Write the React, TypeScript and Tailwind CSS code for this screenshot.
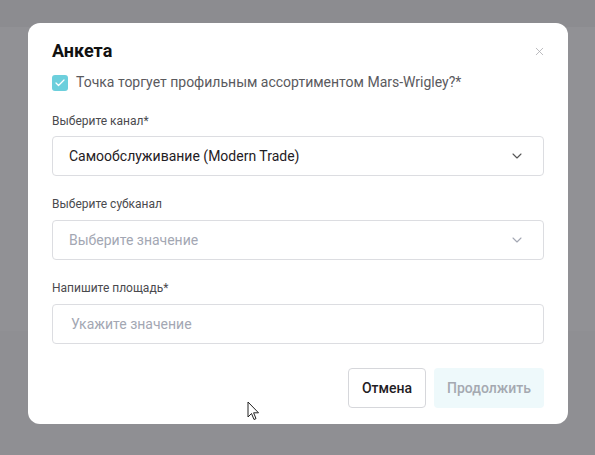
import { ChevronDown, X, Check } from 'lucide-react'

function Select({ value, placeholder }: { value?: string; placeholder: string }) {
  return (
    <div className="flex h-10 items-center justify-between rounded border border-[#dcdde1] bg-white pl-4 pr-[18px]">
      <span className={value ? 'text-[14px] text-[#1f2024]' : 'text-[14px] text-[#a3a7b3]'}>{value || placeholder}</span>
      <ChevronDown className={value ? 'h-4 w-4 text-[#555]' : 'h-4 w-4 text-[#a3a7b3]'} strokeWidth={1.6} />
    </div>
  )
}

export default function App() {
  return (
    <div className="relative h-[455px] w-full overflow-hidden bg-[#8e8e92]" style={{ fontFamily: 'Roboto, "Noto Sans", sans-serif' }}>
      <div className="flex h-full flex-col">
        <div className="h-[27px] bg-[#8c8c90]" />
        <div className="h-[304px] bg-[#919195]" />
        <div className="flex-1 bg-[#8f8f93]" />
      </div>

      <div className="absolute left-[28px] top-[23px] flex h-[401px] w-[540px] flex-col rounded-xl bg-white px-6 pt-[15px]">
        <div className="flex items-center justify-between">
          <h2 className="text-[18px] font-bold leading-[26px] text-[#111]">Анкета</h2>
          <X className="mr-[-2px] h-[13px] w-[13px] text-[#a8a8ac]" strokeWidth={1.4} />
        </div>

        <label className="mt-[9px] flex items-center gap-2">
          <span className="flex h-4 w-4 items-center justify-center rounded-[3px] bg-[#6ccfdc]">
            <Check className="h-3 w-3 text-white" strokeWidth={2.5} />
          </span>
          <span className="text-[14px] leading-[19px] text-[#5a5a5e]">Точка торгует профильным ассортиментом Mars-Wrigley?*</span>
        </label>

        <div className="mt-[21px] text-[12px] leading-4 text-[#4a4a4e]">Выберите канал*</div>
        <div className="mt-[7px]">
          <Select value="Самообслуживание (Modern Trade)" placeholder="Выберите значение" />
        </div>

        <div className="mt-[20px] text-[12px] leading-4 text-[#4a4a4e]">Выберите субканал</div>
        <div className="mt-[8px]">
          <Select placeholder="Выберите значение" />
        </div>

        <div className="mt-[20px] text-[12px] leading-4 text-[#4a4a4e]">Напишите площадь*</div>
        <div className="mt-[8px] flex h-10 items-center rounded border border-[#dcdde1] bg-white pl-[18px]">
          <span className="text-[14px] text-[#a3a7b3]">Укажите значение</span>
        </div>

        <div className="mt-6 flex justify-end gap-2">
          <button className="h-10 w-[78px] rounded border border-[#d6d7db] bg-white text-[14px] font-medium text-[#1f2024]">Отмена</button>
          <button className="h-10 w-[110px] rounded bg-[#eef9fb] text-[14px] font-medium text-[#a5a9b1]">Продолжить</button>
        </div>
      </div>

      <svg className="absolute left-[247px] top-[401px]" width="13" height="21" viewBox="0 0 13 21">
        <path d="M1 1 L1 16 L4.5 12.5 L7 18.5 L9 17.6 L6.6 11.8 L11.5 11.8 Z" fill="white" stroke="#222" strokeWidth="1" strokeLinejoin="round" />
      </svg>
    </div>
  )
}
